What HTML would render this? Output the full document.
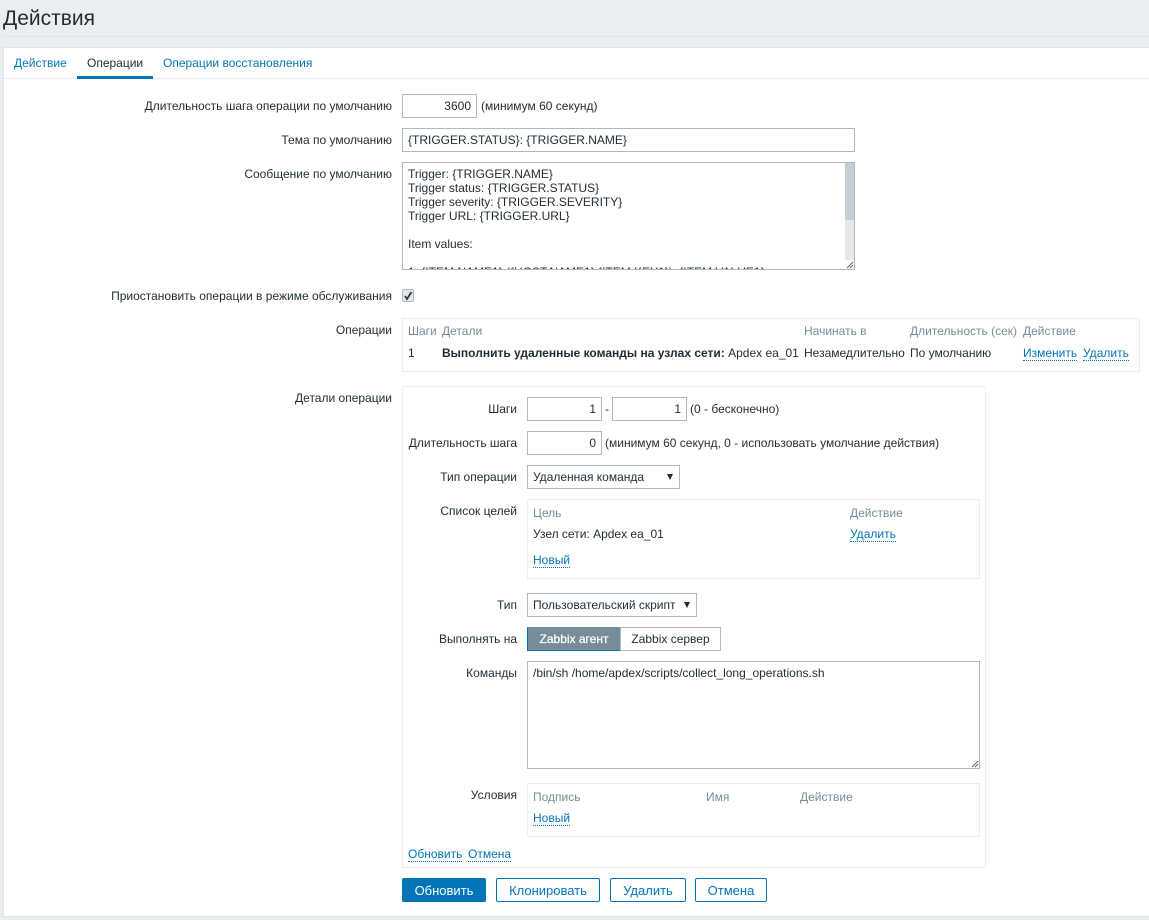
<!DOCTYPE html>
<html lang="ru"><head><meta charset="utf-8"><title>Действия</title>
<style>
html,body{margin:0;padding:0;width:1149px;height:920px;overflow:hidden;background:#ebeef0;font-family:"Liberation Sans",Arial,sans-serif;font-size:12px;color:#1f2c33}
div,span,a{position:absolute;box-sizing:border-box}
.t{white-space:nowrap;line-height:14px;height:14px}
.l{text-align:right;right:757px}
.il{text-align:right;right:632px}
.g{color:#768d99}
.a{color:#0275b8}
.d{border-bottom:1px dotted #0275b8;height:15px}
.i{border:1px solid #acbbc2;background:#fff;height:24px;line-height:22px;padding:0 5px;white-space:nowrap}
.r{text-align:right}
.b{border:1px solid #ebeef0;background:#fff}
.btn{border:1px solid #0275b8;border-radius:2px;height:24px;line-height:23px;text-align:center;color:#0275b8;background:#fff;top:878px;font-size:13px}
.ar{width:0;height:0;border-left:3.5px solid transparent;border-right:3.5px solid transparent;border-top:6px solid #1f2c33}
</style></head><body>
<div class="t" style="left:3px;top:7px;font-size:21px;line-height:24px;height:24px;color:#1f2c33">Действия</div>
<div style="left:3px;top:36px;width:1146px;height:1px;background:#dfe4e7"></div>
<div style="left:3px;top:47px;width:1146px;height:870px;background:#fff;border:1px solid #dfe4e7;border-right:0"></div>
<div style="left:4px;top:78px;width:1145px;height:1px;background:#ebeef0"></div>
<div class="t a" style="left:14px;top:56px">Действие</div>
<div class="t" style="left:87px;top:56px">Операции</div>
<div class="t a" style="left:163px;top:56px">Операции восстановления</div>
<div style="left:77px;top:76px;width:76px;height:3px;background:#0275b8"></div>

<div class="t l" style="top:99px">Длительность шага операции по умолчанию</div>
<div class="i r" style="left:402px;top:94px;width:75px">3600</div>
<div class="t" style="left:481px;top:99px">(минимум 60 секунд)</div>

<div class="t l" style="top:133px">Тема по умолчанию</div>
<div class="i" style="left:402px;top:128px;width:453px">{TRIGGER.STATUS}: {TRIGGER.NAME}</div>

<div class="t l" style="top:167px">Сообщение по умолчанию</div>
<div class="i" style="left:402px;top:162px;width:453px;height:108px;overflow:hidden;line-height:14px;padding:4px 5px">
Trigger: {TRIGGER.NAME}<br>Trigger status: {TRIGGER.STATUS}<br>Trigger severity: {TRIGGER.SEVERITY}<br>Trigger URL: {TRIGGER.URL}<br><br>Item values:<br><br>1. {ITEM.NAME1} ({HOST.NAME1}:{ITEM.KEY1}): {ITEM.VALUE1}
<div style="right:0;top:0;width:9px;height:106px;background:#e8e8e8"></div>
<div style="right:0;top:0;width:9px;height:57px;background:#c5d0d6"></div>
<svg style="position:absolute;right:0;bottom:0" width="9" height="9"><rect width="9" height="9" fill="#fff"/><path d="M2 8L8 2M5 8L8 5" stroke="#666" stroke-width="1"/></svg>
</div>

<div class="t l" style="top:289px">Приостановить операции в режиме обслуживания</div>
<div style="left:402px;top:289px;width:12px;height:13px;background:#e4e7e9;border:1px solid #acbbc2;border-radius:2px"></div>
<svg style="position:absolute;left:402px;top:289px" width="12" height="13"><path d="M3 7L5 10L9.5 3" fill="none" stroke="#2b3a42" stroke-width="1.8"/></svg>

<div class="t l" style="top:323px">Операции</div>
<div class="b" style="left:402px;top:318px;width:738px;height:54px"></div>
<div class="t g" style="left:408px;top:324px">Шаги</div>
<div class="t g" style="left:442px;top:324px">Детали</div>
<div class="t g" style="left:804px;top:324px">Начинать в</div>
<div class="t g" style="left:910px;top:324px">Длительность (сек)</div>
<div class="t g" style="left:1023px;top:324px">Действие</div>
<div class="t" style="left:408px;top:346px">1</div>
<div class="t" style="left:442px;top:346px"><b>Выполнить удаленные команды на узлах сети:</b> Apdex ea_01</div>
<div class="t" style="left:804px;top:346px">Незамедлительно</div>
<div class="t" style="left:910px;top:346px">По умолчанию</div>
<div class="t a d" style="left:1023px;top:346px">Изменить</div>
<div class="t a d" style="left:1083px;top:346px">Удалить</div>

<div class="t l" style="top:391px">Детали операции</div>
<div class="b" style="left:402px;top:386px;width:584px;height:482px"></div>

<div class="t il" style="top:402px">Шаги</div>
<div class="i r" style="left:527px;top:397px;width:75px">1</div>
<div class="t" style="left:605px;top:402px">-</div>
<div class="i r" style="left:612px;top:397px;width:75px">1</div>
<div class="t" style="left:690px;top:402px">(0 - бесконечно)</div>

<div class="t il" style="top:436px">Длительность шага</div>
<div class="i r" style="left:527px;top:431px;width:75px">0</div>
<div class="t" style="left:605px;top:436px">(минимум 60 секунд, 0 - использовать умолчание действия)</div>

<div class="t il" style="top:470px">Тип операции</div>
<div class="i" style="left:527px;top:465px;width:153px">Удаленная команда</div>
<div class="ar" style="left:667px;top:474px"></div>

<div class="t il" style="top:504px">Список целей</div>
<div class="b" style="left:527px;top:499px;width:453px;height:80px"></div>
<div class="t g" style="left:533px;top:506px">Цель</div>
<div class="t g" style="left:850px;top:506px">Действие</div>
<div class="t" style="left:533px;top:527px">Узел сети: Apdex ea_01</div>
<div class="t a d" style="left:850px;top:527px">Удалить</div>
<div class="t a d" style="left:533px;top:553px">Новый</div>

<div class="t il" style="top:598px">Тип</div>
<div class="i" style="left:527px;top:593px;width:170px">Пользовательский скрипт</div>
<div class="ar" style="left:684px;top:602px"></div>

<div class="t il" style="top:632px">Выполнять на</div>
<div style="left:527px;top:627px;width:93px;height:24px;background:#768d99;border:1px solid #0275b8;border-right:0;border-bottom-color:#0275b8;border-top-color:#768d99;border-left-color:#0275b8;color:#fff;text-align:center;line-height:23px;font-weight:normal;-webkit-text-stroke:.25px #fff">Zabbix агент</div>
<div style="left:620px;top:627px;width:101px;height:24px;background:#fff;border:1px solid #acbbc2;text-align:center;line-height:23px">Zabbix сервер</div>

<div class="t il" style="top:666px">Команды</div>
<div class="i" style="left:527px;top:661px;width:453px;height:108px;line-height:14px;padding:4px 5px">/bin/sh /home/apdex/scripts/collect_long_operations.sh
<svg style="position:absolute;right:0;bottom:0" width="9" height="9"><path d="M2 8L8 2M5 8L8 5" stroke="#666" stroke-width="1"/></svg>
</div>

<div class="t il" style="top:788px">Условия</div>
<div class="b" style="left:527px;top:783px;width:453px;height:54px"></div>
<div class="t g" style="left:533px;top:790px">Подпись</div>
<div class="t g" style="left:706px;top:790px">Имя</div>
<div class="t g" style="left:800px;top:790px">Действие</div>
<div class="t a d" style="left:533px;top:811px">Новый</div>

<div class="t a d" style="left:408px;top:847px">Обновить</div>
<div class="t a d" style="left:468px;top:847px">Отмена</div>

<div class="btn" style="left:402px;width:84px;background:#0275b8;color:#fff">Обновить</div>
<div class="btn" style="left:496px;width:104px">Клонировать</div>
<div class="btn" style="left:610px;width:76px">Удалить</div>
<div class="btn" style="left:695px;width:72px">Отмена</div>
</body></html>
